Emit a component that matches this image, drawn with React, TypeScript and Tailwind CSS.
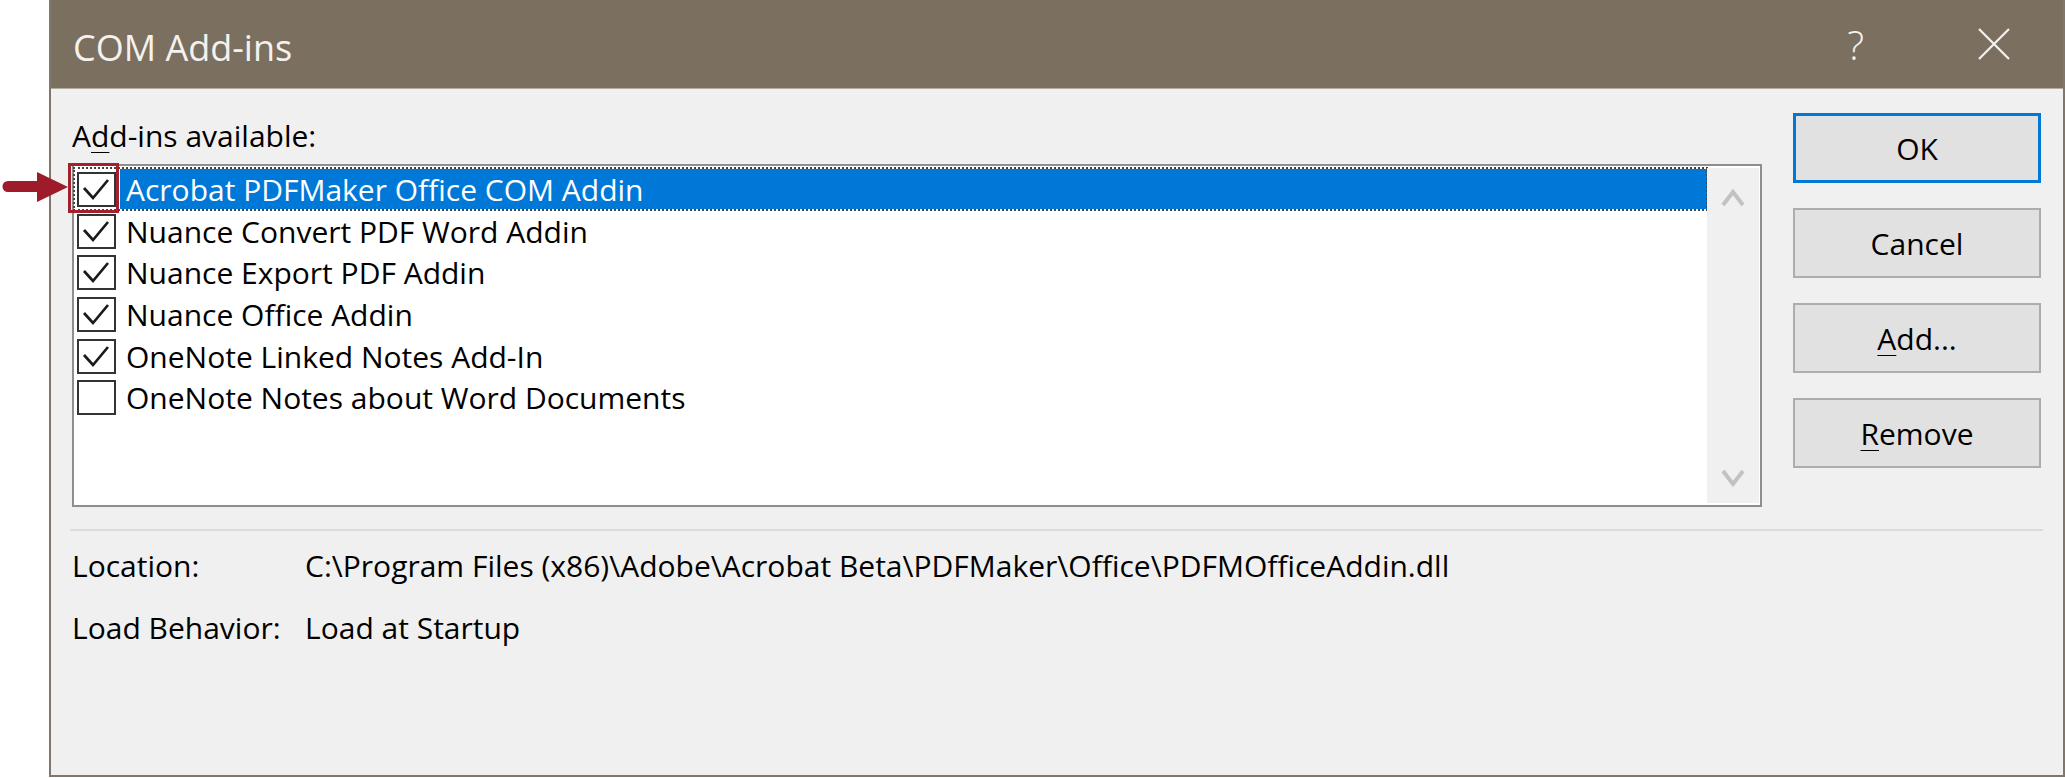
import React from "react"

interface AddinItem {
  name: string
  checked: boolean
  selected?: boolean
}

const addins: AddinItem[] = [
  { name: "Acrobat PDFMaker Office COM Addin", checked: true, selected: true },
  { name: "Nuance Convert PDF Word Addin", checked: true },
  { name: "Nuance Export PDF Addin", checked: true },
  { name: "Nuance Office Addin", checked: true },
  { name: "OneNote Linked Notes Add-In", checked: true },
  { name: "OneNote Notes about Word Documents", checked: false },
]

function CheckBox({ checked }: { checked: boolean }) {
  return (
    <div className="mt-[4px] h-[35px] w-[39px] shrink-0 border-2 border-[#333333] bg-white">
      {checked && (
        <svg viewBox="0 0 35 31" className="h-full w-full">
          <polyline
            points="5,14 14,24 29,6"
            fill="none"
            stroke="#1a1a1a"
            strokeWidth="2.7"
            strokeLinejoin="miter"
          />
        </svg>
      )}
    </div>
  )
}

function AddinRow({ item }: { item: AddinItem }) {
  return (
    <div
      className={
        item.selected
          ? "flex h-[41.7px] items-stretch pl-[3px] outline-2 outline-dotted outline-offset-[-1px] outline-[#444444]"
          : "flex h-[41.7px] items-stretch pl-[3px]"
      }
    >
      <CheckBox checked={item.checked} />
      {item.selected ? (
        <span className="my-[1px] ml-[4px] flex-1 bg-[#0078d7] pl-[6px] pt-[2px] leading-[37.7px] whitespace-nowrap text-white">
          {item.name}
        </span>
      ) : (
        <span className="ml-[10px] pt-[2px] leading-[39.7px] whitespace-nowrap">{item.name}</span>
      )}
    </div>
  )
}

function DialogButton({ children, primary = false }: { children: React.ReactNode; primary?: boolean }) {
  return (
    <button
      type="button"
      className={
        primary
          ? "flex h-[70px] w-[248px] items-center justify-center border-[3px] border-[#0078d7] bg-[#e1e1e1]"
          : "flex h-[70px] w-[248px] items-center justify-center border-2 border-[#adadad] bg-[#e1e1e1]"
      }
    >
      {children}
    </button>
  )
}

export default function App() {
  return (
    <div className="relative h-[778px] w-[2065px] overflow-hidden bg-white font-['Open_Sans',sans-serif] text-[30px] text-black">
      {/* dialog window */}
      <div className="ml-[49px] flex h-[777px] w-[2016px] flex-col border-x-2 border-b-2 border-[#80776a]">
        {/* title bar */}
        <div className="flex h-[89px] shrink-0 items-center border-b border-[#b3ab9f] bg-[#7b705f] text-[#f4f2ef]">
          <span className="pl-[22px] pt-[8px] text-[36px] leading-none">COM Add-ins</span>
          <div className="ml-auto flex items-center pr-[53px]">
            <span className="pt-[2px] text-[40px] font-light leading-none">?</span>
            <svg viewBox="0 0 32 32" className="ml-[114px] h-[32px] w-[32px]">
              <path d="M1 1 L31 31 M31 1 L1 31" stroke="#f4f2ef" strokeWidth="2.2" fill="none" />
            </svg>
          </div>
        </div>

        {/* body */}
        <div className="flex-1 bg-[#f0f0f0] pl-[21px] pr-[20px]">
          <div className="flex">
            <div className="w-[1690px]">
              <div className="mt-[27px] leading-[40px]">
                A<span className="underline decoration-1 underline-offset-[5px]">d</span>d-ins available:
              </div>
              {/* list box */}
              <div className="mt-[8px] flex h-[343px] border-2 border-[#8e8e8e] bg-white">
                <div className="flex-1 pt-[2px]">
                  {addins.map((item) => (
                    <AddinRow key={item.name} item={item} />
                  ))}
                </div>
                <div className="my-[2px] mr-[1px] flex w-[52px] flex-col items-center justify-between bg-[#f0f0f0] pt-[20px] pb-[15px]">
                  <svg viewBox="0 0 24 19" className="h-[19px] w-[24px]">
                    <polyline points="2,17 12,4 22,17" fill="none" stroke="#c2c2c2" strokeWidth="4" />
                  </svg>
                  <svg viewBox="0 0 24 19" className="h-[19px] w-[24px]">
                    <polyline points="2,2 12,15 22,2" fill="none" stroke="#c2c2c2" strokeWidth="4" />
                  </svg>
                </div>
              </div>
            </div>

            {/* buttons */}
            <div className="ml-[31px] flex flex-col gap-[25px] pt-[24px]">
              <DialogButton primary>OK</DialogButton>
              <DialogButton>Cancel</DialogButton>
              <DialogButton>
                <span>
                  <span className="underline decoration-1 underline-offset-[5px]">A</span>dd...
                </span>
              </DialogButton>
              <DialogButton>
                <span>
                  <span className="underline decoration-1 underline-offset-[5px]">R</span>emove
                </span>
              </DialogButton>
            </div>
          </div>

          <div className="-ml-[2px] mt-[22px] h-[2px] bg-[#dcdcdc]" />

          <div className="mt-[15px] grid grid-cols-[233px_1fr] gap-y-[22px] leading-[40px]">
            <span>Location:</span>
            <span className="whitespace-nowrap">C:\Program Files (x86)\Adobe\Acrobat Beta\PDFMaker\Office\PDFMOfficeAddin.dll</span>
            <span className="whitespace-nowrap">Load Behavior:</span>
            <span>Load at Startup</span>
          </div>
        </div>
      </div>

      {/* annotation: arrow and highlight */}
      <svg viewBox="0 0 70 34" className="absolute left-0 top-[170px] h-[34px] w-[70px]">
        <path d="M8 11 H40 V22 H8 A5.5 5.5 0 0 1 8 11 Z" fill="#9e1b2a" />
        <polygon points="37,2 68,17 37,32" fill="#9e1b2a" />
      </svg>
      <div className="absolute left-[68px] top-[163px] h-[50px] w-[51px] border-[3px] border-[#a3212c]" />
    </div>
  )
}
